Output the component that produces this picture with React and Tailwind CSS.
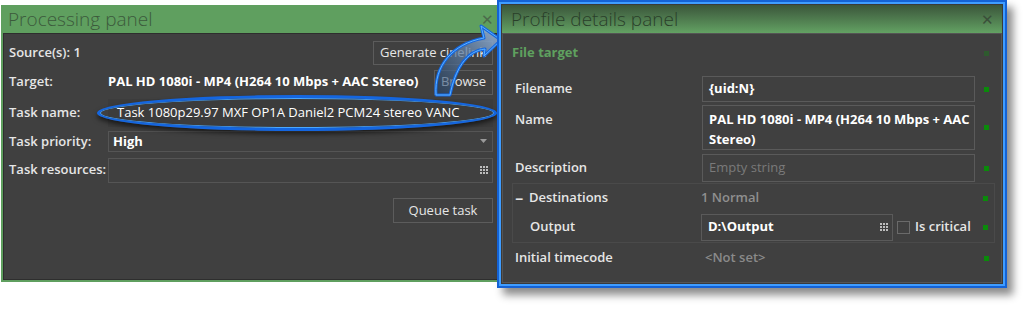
import React from 'react';

function GridDots() {
  return (
    <svg width="8" height="8" viewBox="0 0 8 8" className="shrink-0">
      {[0, 3, 6].map((y) =>
        [0, 3, 6].map((x) => <rect key={`${x}-${y}`} x={x} y={y} width="2" height="2" fill="#bdbdbd" />)
      )}
    </svg>
  );
}

function Square({ dim }) {
  return <div className={`w-[5px] h-[5px] shrink-0 ${dim ? 'bg-[#2e5a2e]' : 'bg-[#0a8a0a]'}`} />;
}

function ProcessingPanel() {
  return (
    <div className="mt-[5px] ml-px w-[500px] h-[277px] border border-[#5f9f5f] bg-[#5f9f5f] flex flex-col">
      {/* Header */}
      <div className="h-[27px] flex items-center justify-between pl-[6px] pr-[6px]">
        <span className="text-[19px] font-light text-[#3c5a3c] leading-none">Processing panel</span>
        <span className="text-[#4b6b4b] text-[15px] leading-none">✕</span>
      </div>
      {/* Body */}
      <div className="flex-1 bg-[#404040] border border-[#2e2e2e] mx-px mb-px px-[5px] pt-[6px] text-[13px] text-[#e6e6e6]">
        <div className="h-[25px] flex items-center justify-between">
          <span className="font-semibold">Source(s): 1</span>
          <div className="h-[24px] w-[120px] border border-[#5c5c5c] flex items-center justify-center">Generate cinelink</div>
        </div>
        <div className="h-[26px] mt-[4px] flex items-center">
          <span className="w-[99px] font-semibold">Target:</span>
          <span className="font-bold text-white">PAL HD 1080i - MP4 (H264 10 Mbps + AAC Stereo)</span>
          <div className="ml-auto h-[25px] w-[59px] border border-[#5c5c5c] flex items-center justify-center">Browse</div>
        </div>
        <div className="h-[29px] mt-[3px] flex items-center">
          <span className="w-[99px] font-semibold">Task name:</span>
          <div className="flex-1 h-[28px] bg-[#3c3c3c] flex items-center pl-[9px] text-white">
            Task 1080p29.97 MXF OP1A Daniel2 PCM24 stereo VANC
          </div>
        </div>
        <div className="h-[21px] mt-[4px] flex items-center">
          <span className="w-[99px] font-semibold">Task priority:</span>
          <div className="flex-1 h-[21px] border border-[#555] flex items-center pl-[4px] pr-[5px]">
            <span className="font-bold text-white">High</span>
            <svg width="7" height="5" viewBox="0 0 7 5" className="ml-auto">
              <path d="M0 0h7L3.5 4z" fill="#9a9a9a" />
            </svg>
          </div>
        </div>
        <div className="h-[26px] mt-[5px] flex items-center">
          <span className="w-[99px] font-semibold">Task resources:</span>
          <div className="flex-1 h-[25px] border border-[#555] flex items-center justify-end pr-[4px]">
            <GridDots />
          </div>
        </div>
        <div className="flex justify-end mt-[15px]">
          <div className="h-[25px] w-[100px] border border-[#5c5c5c] flex items-center justify-center">Queue task</div>
        </div>
      </div>
    </div>
  );
}

function Row({ label, children, h, mt, dim, top }) {
  return (
    <div className={`flex ${top ? 'items-start' : 'items-center'} ${h} ${mt}`}>
      <span className={`w-[187px] font-semibold text-[#e6e6e6] ${top ? 'pt-[5px]' : ''}`}>{label}</span>
      <div className="flex-1 flex items-center">{children}</div>
      <div className="w-[18px] flex justify-center self-center">
        <Square dim={dim} />
      </div>
    </div>
  );
}

function ProfilePanel() {
  return (
    <div className="relative z-10 -ml-[4px] w-[510px] h-[288px] border-2 border-[#1462d6] shadow-[6px_7px_8px_rgba(0,0,0,0.45)]">
      <div className="h-full border-2 border-[#3f9dff] bg-[#3a3a3a] flex flex-col">
        {/* Header */}
        <div className="mt-px mx-px h-[28px] bg-gradient-to-b from-[#3b563b] to-[#63a263] flex items-center justify-between pl-[9px] pr-[8px]">
          <span className="text-[19px] font-light text-[#2a3f2a] leading-none">Profile details panel</span>
          <span className="text-[#3a4f3a] text-[15px] leading-none">✕</span>
        </div>
        {/* Body */}
        <div className="flex-1 mx-px mb-px bg-[#404040] border border-[#555] pl-[12px] pr-[6px] pt-[8px] text-[13px]">
          <div className="flex items-center h-[22px] -ml-[3px]">
            <span className="font-bold text-[#5fa05f]">File target</span>
            <div className="ml-auto w-[18px] flex justify-center"><Square dim /></div>
          </div>
          <Row label="Filename" h="h-[26px]" mt="mt-[12px]">
            <div className="w-[273px] h-[26px] border border-[#5a5a5a] flex items-center pl-[6px] font-bold text-white">{'{uid:N}'}</div>
          </Row>
          <Row label="Name" h="h-[45px]" mt="mt-[3px]" top>
            <div className="w-[273px] h-[45px] border border-[#5a5a5a] pl-[6px] pt-[3px] leading-[20px] font-bold text-white">
              PAL HD 1080i - MP4 (H264 10 Mbps + AAC Stereo)
            </div>
          </Row>
          <Row label="Description" h="h-[28px]" mt="mt-[4px]">
            <div className="w-[273px] h-[28px] border border-[#5a5a5a] flex items-center pl-[6px] text-[#7a7a7a]">Empty string</div>
          </Row>
          <div className="mt-px border border-[#4a4a4a] -ml-[3px] pl-[2px]">
            <div className="flex items-center h-[28px]">
              <span className="w-[186px] font-semibold text-[#e6e6e6] flex items-center">
                <span className="w-[14px] text-[14px] font-bold">−</span>Destinations
              </span>
              <span className="font-semibold text-[#8f8f8f]">1 Normal</span>
              <div className="ml-auto w-[17px] flex justify-center"><Square /></div>
            </div>
            <div className="flex items-center h-[28px] mt-px mb-px">
              <span className="w-[186px] pl-[15px] font-semibold text-[#e6e6e6]">Output</span>
              <div className="w-[192px] h-[27px] border border-[#5a5a5a] flex items-center pl-[6px] pr-[4px] font-bold text-white">
                D:\Output
                <span className="ml-auto"><GridDots /></span>
              </div>
              <div className="ml-[4px] w-[13px] h-[13px] border border-[#6a6a6a]" />
              <span className="ml-[5px] font-semibold text-[#e6e6e6]">Is critical</span>
              <div className="ml-auto w-[17px] flex justify-center"><Square /></div>
            </div>
          </div>
          <Row label="Initial timecode" h="h-[30px]" mt="mt-0">
            <span className="pl-[3px] font-semibold text-[#8a8a8a]">{'<Not set>'}</span>
          </Row>
        </div>
      </div>
    </div>
  );
}

export default function App() {
  return (
    <div className="relative w-[1025px] h-[310px] bg-white overflow-hidden font-['Open_Sans',sans-serif]">
      <div className="flex items-start">
        <ProcessingPanel />
        <ProfilePanel />
      </div>
      {/* Highlight ellipse around task name */}
      <div className="absolute left-[97px] top-[95px] w-[400px] h-[36px] rounded-[50%] border-[3px] border-[#1466e0] shadow-[0_3px_5px_rgba(0,0,0,0.6),inset_0_0_0_1px_#4aa8ff] pointer-events-none" />
      {/* Curved arrow */}
      <svg className="absolute left-0 top-0 pointer-events-none" width="1025" height="310" viewBox="0 0 1025 310">
        <defs>
          <linearGradient id="arr" x1="0" y1="1" x2="1" y2="0">
            <stop offset="0" stopColor="#1f3f66" stopOpacity="0.55" />
            <stop offset="1" stopColor="#9ab8dc" stopOpacity="0.95" />
          </linearGradient>
        </defs>
        <path
          d="M436 95 C434 66 452 44 484 38 L481 26 L501 40 L484 56 L485 49 C466 51 455 70 450 95 Z"
          fill="url(#arr)"
          stroke="#1466e0"
          strokeWidth="3"
          strokeLinejoin="round"
        />
        <path
          d="M436 95 C434 66 452 44 484 38 L481 26 L501 40 L484 56 L485 49 C466 51 455 70 450 95 Z"
          fill="none"
          stroke="#5fb4ff"
          strokeWidth="1"
          strokeLinejoin="round"
        />
      </svg>
    </div>
  );
}
